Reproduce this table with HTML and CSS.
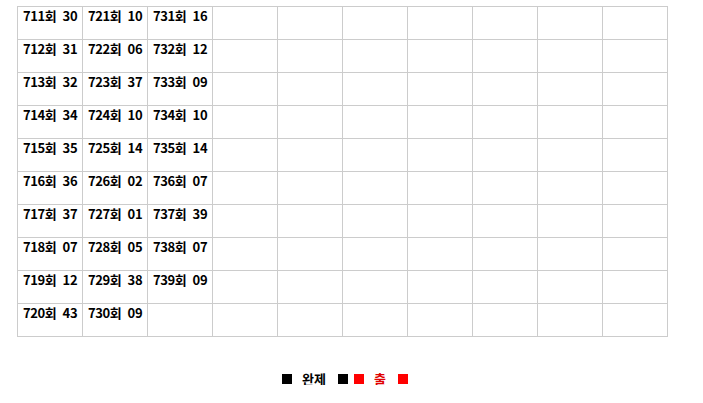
FILE: index.html
```html
<!DOCTYPE html>
<html lang="ko">
<head>
<meta charset="utf-8">
<link rel="stylesheet" href="styles.css">
</head>
<body>
<div class="board">
  <div class="cell">711회 30</div><div class="cell">721회 10</div><div class="cell">731회 16</div><div class="cell"></div><div class="cell"></div><div class="cell"></div><div class="cell"></div><div class="cell"></div><div class="cell"></div><div class="cell"></div>
  <div class="cell">712회 31</div><div class="cell">722회 06</div><div class="cell">732회 12</div><div class="cell"></div><div class="cell"></div><div class="cell"></div><div class="cell"></div><div class="cell"></div><div class="cell"></div><div class="cell"></div>
  <div class="cell">713회 32</div><div class="cell">723회 37</div><div class="cell">733회 09</div><div class="cell"></div><div class="cell"></div><div class="cell"></div><div class="cell"></div><div class="cell"></div><div class="cell"></div><div class="cell"></div>
  <div class="cell">714회 34</div><div class="cell">724회 10</div><div class="cell">734회 10</div><div class="cell"></div><div class="cell"></div><div class="cell"></div><div class="cell"></div><div class="cell"></div><div class="cell"></div><div class="cell"></div>
  <div class="cell">715회 35</div><div class="cell">725회 14</div><div class="cell">735회 14</div><div class="cell"></div><div class="cell"></div><div class="cell"></div><div class="cell"></div><div class="cell"></div><div class="cell"></div><div class="cell"></div>
  <div class="cell">716회 36</div><div class="cell">726회 02</div><div class="cell">736회 07</div><div class="cell"></div><div class="cell"></div><div class="cell"></div><div class="cell"></div><div class="cell"></div><div class="cell"></div><div class="cell"></div>
  <div class="cell">717회 37</div><div class="cell">727회 01</div><div class="cell">737회 39</div><div class="cell"></div><div class="cell"></div><div class="cell"></div><div class="cell"></div><div class="cell"></div><div class="cell"></div><div class="cell"></div>
  <div class="cell">718회 07</div><div class="cell">728회 05</div><div class="cell">738회 07</div><div class="cell"></div><div class="cell"></div><div class="cell"></div><div class="cell"></div><div class="cell"></div><div class="cell"></div><div class="cell"></div>
  <div class="cell">719회 12</div><div class="cell">729회 38</div><div class="cell">739회 09</div><div class="cell"></div><div class="cell"></div><div class="cell"></div><div class="cell"></div><div class="cell"></div><div class="cell"></div><div class="cell"></div>
  <div class="cell">720회 43</div><div class="cell">730회 09</div><div class="cell"></div><div class="cell"></div><div class="cell"></div><div class="cell"></div><div class="cell"></div><div class="cell"></div><div class="cell"></div><div class="cell"></div>
</div>
<div class="legend">
  <span class="sq black s1"></span><span class="label">완제</span><span class="sq black s2"></span><span class="sq red s3"></span><span class="label red-text s4">출</span><span class="sq red s5"></span>
</div>
</body>
</html>
```
FILE: styles.css
```css
html, body {
  margin: 0;
  padding: 0;
  background: #fff;
}
body {
  padding: 6px 0 0 17px;
  font-family: "Noto Sans CJK KR", "Liberation Sans", sans-serif;
  font-weight: bold;
  color: #000;
}
.board {
  display: grid;
  grid-template-columns: repeat(10, 65px);
  grid-auto-rows: 33px;
  width: 650px;
  border-left: 1px solid #cccccc;
  border-top: 1px solid #cccccc;
}
.cell {
  border-right: 1px solid #cccccc;
  border-bottom: 1px solid #cccccc;
  padding: 1px 0 0 5px;
  font-size: 13px;
  line-height: 15px;
  letter-spacing: -0.4px;
  word-spacing: 3px;
  white-space: pre;
}
.legend {
  display: flex;
  align-items: center;
  margin-top: 36px;
  margin-left: 265px;
  height: 12px;
  font-size: 13px;
  line-height: 12px;
}
.sq {
  width: 10px;
  height: 10px;
  flex: none;
}
.black { background: #000; }
.red { background: #ff0000; }
.red-text { color: #e00000; }
.label { display: block; }
.s1 + .label { margin-left: 10px; }
.s2 { margin-left: 12px; }
.s3 { margin-left: 6px; }
.s4 { margin-left: 10px; }
.s5 { margin-left: 12px; }
```
